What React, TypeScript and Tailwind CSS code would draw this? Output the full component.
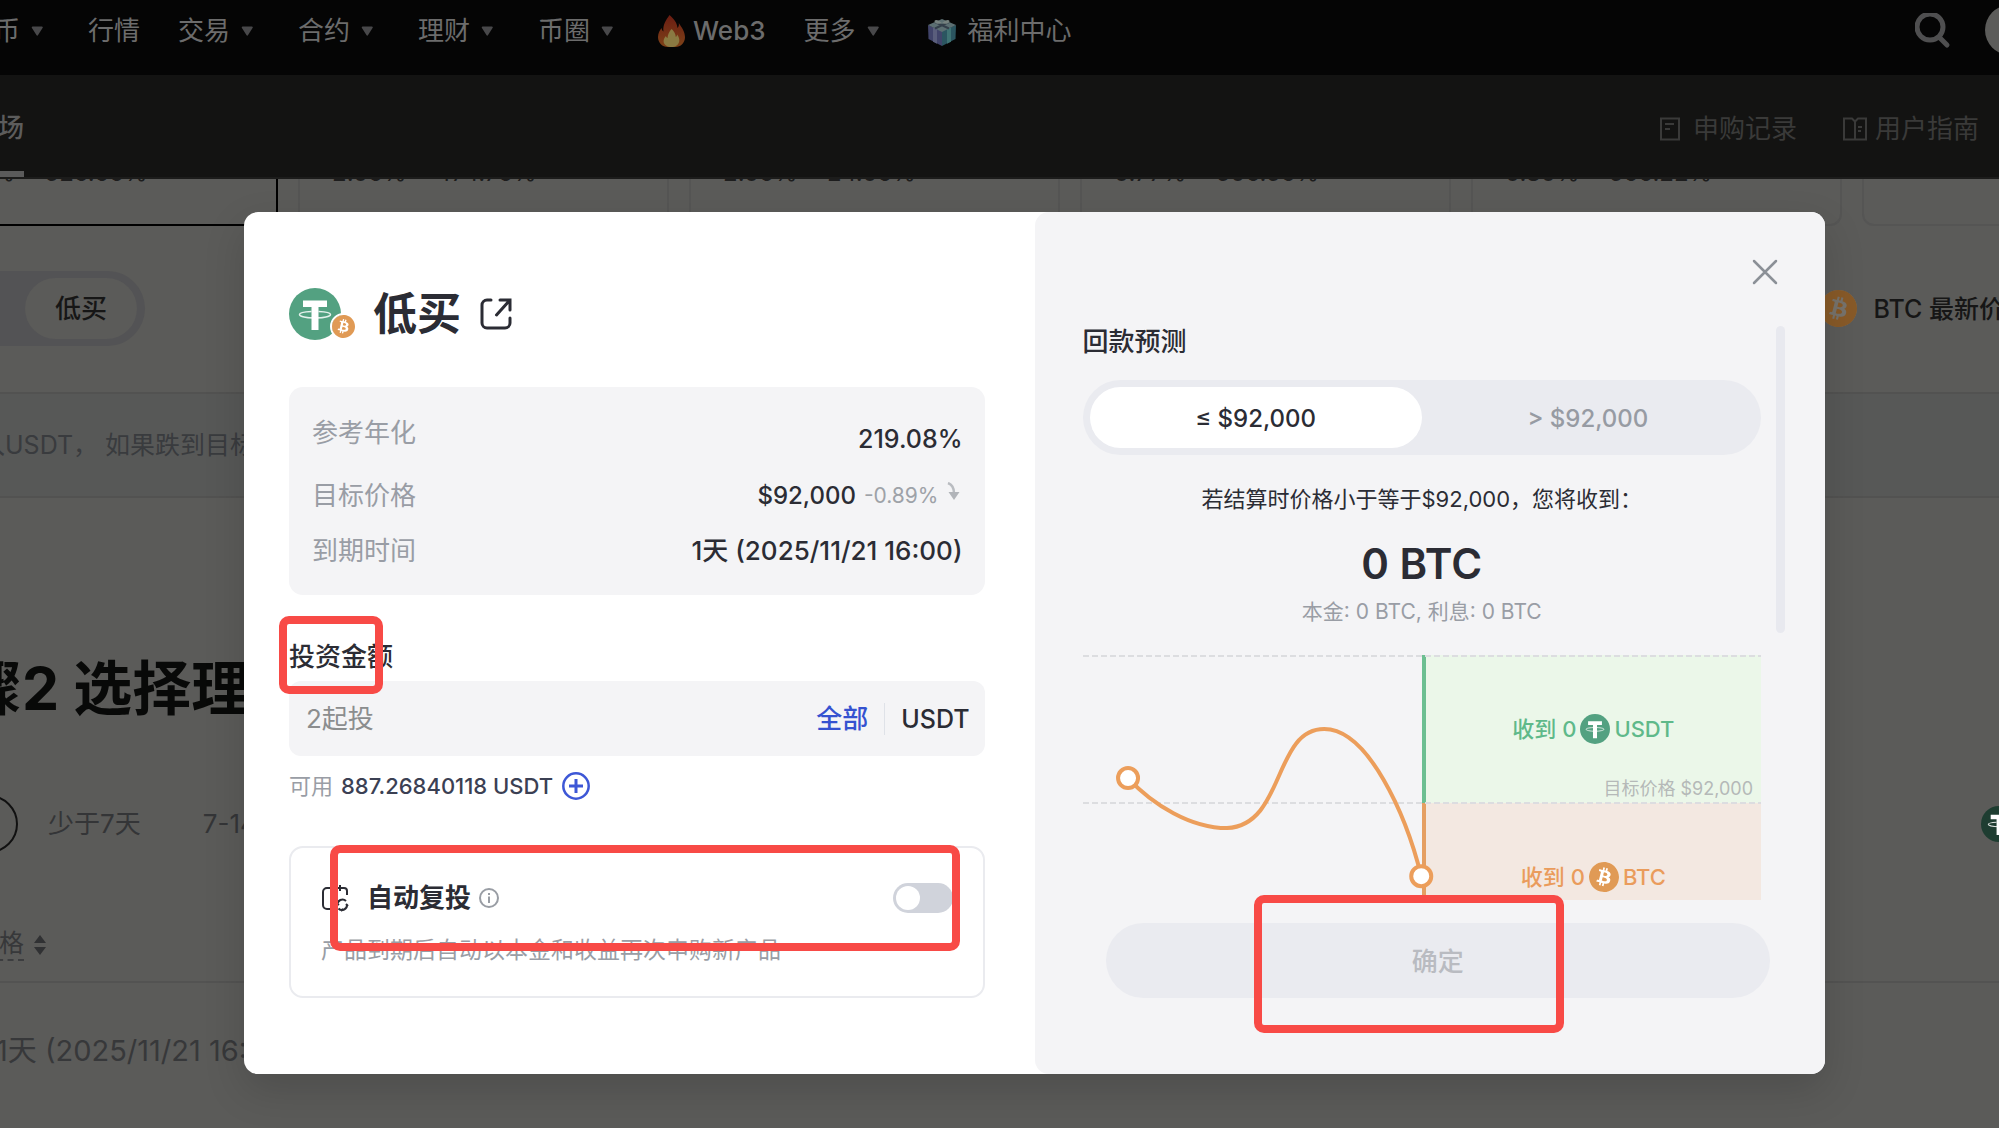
import { useState } from "react";
import { SiBitcoin } from "react-icons/si";

const NAV_ITEMS = [
  { label: "买币", caret: true },
  { label: "行情", caret: false },
  { label: "交易", caret: true },
  { label: "合约", caret: true },
  { label: "理财", caret: true },
  { label: "币圈", caret: true },
];

const PRODUCTS = [
  { apr: "3.06% ~ 526.66%", active: true },
  { apr: "2.06% ~ 474.76%", active: false },
  { apr: "2.06% ~ 24.06%", active: false },
  { apr: "0.77% ~ 506.56%", active: false },
  { apr: "0.80% ~ 566.22%", active: false },
  { apr: "", active: false },
];

function Caret() {
  return (
    <svg className="ml-2 h-3 w-[22px]" viewBox="0 0 22 12" fill="#48484a">
      <path d="M4.500 1.500h9.500a.8.8 0 0 1 .7 1.200l-4.600 7.300a1 1 0 0 1-1.700 0L3.800 2.700a.8.8 0 0 1 .7-1.200z" />
    </svg>
  );
}

function Flame() {
  return (
    <svg className="h-8 w-[27px]" viewBox="0 0 27 32">
      <defs>
        <linearGradient id="flame" x1="0" y1="0" x2="0" y2="1">
          <stop offset="0" stopColor="#6b1c12" />
          <stop offset="1" stopColor="#7d4218" />
        </linearGradient>
      </defs>
      <path
        d="M11.500 0c4.500 4 7.500 7.500 8 13 1.300-1.300 1.600-3 1.300-5 3 4.500 6.200 9 6.200 14 0 6-4.500 10-9.500 10h-8C4.500 32 0 28 0 22 0 18 2 15 3.500 13c.4 2 1 3 2 3.500C4.500 10 8 5 11.500 0z"
        fill="url(#flame)"
      />
      <path
        d="M13.500 14c3.500 3 4 5.500 4.300 8 .9-.7 1.200-1.500 1.400-2.500 1.600 2.500 2.500 4.500 2 7-.7 3.500-3.600 5.500-7.700 5.500s-7.700-2-7.900-5.500c-.1-2.300 1-4 2.300-5.500.4 1 .8 1.600 1.600 2 .2-3.500 1.700-6.500 4-9z"
        fill="#8a7a42"
      />
    </svg>
  );
}

function Gift() {
  return (
    <svg className="h-8 w-9" viewBox="0 0 36 32">
      <path d="M4 10l14 6v15L4.500 24z" fill="#41446a" />
      <path d="M32 10l-14 6v15l13.500-7z" fill="#2b5560" />
      <path d="M4 10l14-6 14 6-14 7z" fill="#5c6f72" />
      <path d="M9 12.500l4 1.700v14.500l-4-2z" fill="#5a5e7c" />
      <path d="M23 14.200l4-1.700v14.200l-4 2z" fill="#3f7374" />
      <path d="M11 7l14 6.500M25 7l-14 6.500" stroke="#333f4a" strokeWidth="2" />
      <path d="M18 8c-5-5-9-3-7-.5S18 8 18 8zm0 0c5-5 9-3 7-.5S18 8 18 8z" fill="#76827f" />
    </svg>
  );
}

function Tether({ className }: { className: string }) {
  return (
    <svg className={className} viewBox="0 0 52 52">
      <circle cx="26" cy="26" r="26" fill="currentColor" />
      <path d="M14 12.500h24V19h-8.500v23h-7V19H14z" fill="#fff" />
      <path
        d="M22.500 23.500C15 23.900 10.500 25 10.500 26.500c0 1.900 7 3.400 15.500 3.400s15.500-1.500 15.500-3.400c0-1.500-4.500-2.600-12-3"
        fill="none"
        stroke="#fff"
        strokeOpacity=".85"
        strokeWidth="1.500"
      />
    </svg>
  );
}

function Bitcoin({ className }: { className: string }) {
  return (
    <span className="flex rounded-full bg-white">
      <SiBitcoin className={className} />
    </span>
  );
}

function Backdrop() {
  return (
    <div className="text-[26px] leading-9">
      <header className="flex h-[75px] items-start bg-[#050505] pt-[13px] text-[#6c6c6c]">
        <nav className="-ml-8 flex items-center gap-[38px]">
          {NAV_ITEMS.map((item) => (
            <a key={item.label} href="#" className="flex items-center whitespace-nowrap">
              {item.label}
              {item.caret && <Caret />}
            </a>
          ))}
          <a href="#" className="flex items-center gap-2">
            <Flame />
            <span className="font-medium">Web3</span>
          </a>
          <a href="#" className="flex items-center whitespace-nowrap">
            更多
            <Caret />
          </a>
          <a href="#" className="flex items-center gap-2 whitespace-nowrap">
            <Gift />
            福利中心
          </a>
        </nav>
        <button aria-label="搜索" className="ml-auto">
          <svg className="h-9 w-9" viewBox="0 0 36 36" fill="none" stroke="#4f4f50" strokeWidth="5">
            <circle cx="15" cy="14" r="13" />
            <path d="M24 24l8 8" strokeLinecap="round" />
          </svg>
        </button>
        <span className="-mt-2 -mr-9 ml-[34px] h-[50px] w-[50px] shrink-0 rounded-full bg-[#5c5c5a]" />
      </header>

      <div className="flex h-[104px] items-stretch justify-between border-b-2 border-[#1c1c1b] bg-[#131312] pr-5 text-[#3a3a39]">
        <a href="#" className="-ml-7 flex items-center border-b-[6px] border-[#5b5b5b] pt-2.5 font-medium text-[#5c5c5c]">
          市场
        </a>
        <div className="flex items-center gap-[46px] pt-1.5">
          <a href="#" className="flex items-center gap-3">
            <svg className="h-6 w-[22px]" viewBox="0 0 22 24" fill="none" stroke="currentColor" strokeWidth="2">
              <path d="M2 1.500h18v21H2zM6 7h9M6 12h5" />
            </svg>
            申购记录
          </a>
          <a href="#" className="flex items-center gap-2">
            <svg className="h-6 w-6" viewBox="0 0 24 24" fill="none" stroke="currentColor" strokeWidth="2">
              <path d="M1 1.500h8l3 3 3-3h8v21H1zM12 4v18M15 10h4M15 14h3" />
            </svg>
            用户指南
          </a>
        </div>
      </div>

      <div className="-ml-[93px] flex gap-5 text-[24px] leading-6 text-[#1d1d1d]">
        {PRODUCTS.map((product) => (
          <div
            key={product.apr}
            className={`h-[47px] w-[371px] shrink-0 overflow-hidden border-t-0 pl-8
              ${product.active
                ? "border-2 border-black"
                : "rounded-b-xl border-2 border-[#555554]"
              }`}
          >
            <p className="-mt-[18px]">{product.apr}</p>
          </div>
        ))}
      </div>

      <div className="mt-[45px] flex items-center justify-between text-[#161616]">
        <div className="-ml-12 flex h-[75px] items-center rounded-full bg-[#535355] pr-2 pl-[73px]">
          <button className="h-[61px] rounded-full bg-[#5b5b59] px-[30px] font-medium">低买</button>
        </div>
        <div className="-mr-[30px] flex items-center gap-4 whitespace-nowrap">
          <span className="rounded-full bg-[#77736c]">
            <SiBitcoin className="h-[37px] w-[37px] text-[#885a28]" />
          </span>
          <span className="text-[25px] font-medium">BTC 最新价格</span>
        </div>
      </div>

      <div className="mt-[46px] flex h-[106px] items-center border-y-2 border-[#525251] bg-[#575857] text-[25px] text-[#393b3e]">
        <p className="-ml-5 whitespace-nowrap">入USDT，&nbsp;如果跌到目标价格</p>
      </div>

      <h1 className="mt-[155px] -ml-[37px] text-[59px] leading-[72px] font-bold whitespace-nowrap text-[#080908]">
        骤2 选择理财产品
      </h1>

      <div className="mt-[70px] flex items-center text-[26px] text-[#343537]">
        <button className="-ml-16 h-[58px] w-[82px] rounded-full border-2 border-[#111] text-left">全部</button>
        <button className="ml-[30px]">少于7天</button>
        <button className="ml-[62px]">7-14天</button>
        <Tether className="mr-[-18px] ml-auto h-9 w-9 text-[#1e3d31]" />
      </div>

      <div className="mt-[74px] flex h-[56px] items-start border-b-2 border-[#535352] text-[25px] text-[#37383a]">
        <span className="-ml-[76px] border-b-2 border-dashed border-[#3c3d3f] leading-8">目标价格</span>
        <svg className="mt-2 ml-2.5 h-5 w-3" viewBox="0 0 12 20" fill="#303133">
          <path d="M6 0l6 8H0zM6 20l6-8H0z" />
        </svg>
      </div>
      <p className="-ml-1 pt-[50px] text-[29px] whitespace-nowrap text-[#37383a]">1天 (2025/11/21 16:00)</p>
    </div>
  );
}

function InvestPanel() {
  const [autoInvest, setAutoInvest] = useState(false);

  return (
    <section className="px-[45px] py-[76px] pr-[50px] text-[26px] leading-9 text-[#2b2c34]">
      {/* Title */}
      <div className="flex h-[52px] items-center">
        <div className="relative">
          <Tether className="h-[52px] w-[52px] text-[#53a181]" />
          <div className="absolute -right-4 bottom-0 rounded-full border-2 border-white">
            <Bitcoin className="h-[23px] w-[23px] text-[#e09a55]" />
          </div>
        </div>
        <h2 className="ml-8 text-[44px] font-bold">低买</h2>
        <a href="#" aria-label="分享" className="ml-[18px]">
          <svg className="h-9 w-9" viewBox="0 0 36 36" fill="none" stroke="currentColor" strokeWidth="3">
            <path d="M12 4H8a5 5 0 0 0-5 5v18a5 5 0 0 0 5 5h18a5 5 0 0 0 5-5v-5" strokeLinecap="round" />
            <path d="M21 4h10v10M30.500 4.500L17.500 19" strokeLinecap="round" />
          </svg>
        </a>
      </div>

      {/* Product details */}
      <dl className="mt-[47px] rounded-[14px] bg-[#f4f4f6] pt-7 pr-[22px] pb-[26px] pl-[23px]">
        <div className="flex items-center justify-between">
          <dt className="pb-3 text-[#999da5]">参考年化</dt>
          <dd className="text-[25px] font-medium">219.08%</dd>
        </div>
        <div className="mt-[15px] flex items-center justify-between">
          <dt className="text-[#999da5]">目标价格</dt>
          <dd className="flex items-center gap-2 text-[24px] font-medium">
            $92,000
            <span className="text-[21px] font-normal text-[#9ea2a8]">-0.89%</span>
            <svg className="mb-2 h-5 w-4" viewBox="0 0 16 20">
              <path d="M1 1c5 2 6 6 6 10" fill="none" stroke="#b9bcc1" strokeWidth="2.500" />
              <path d="M1.500 10h11L7 18z" fill="#b1b4b9" />
            </svg>
          </dd>
        </div>
        <div className="mt-[19px] flex items-center justify-between">
          <dt className="text-[#999da5]">到期时间</dt>
          <dd className="text-[26px] font-medium">1天 (2025/11/21 16:00)</dd>
        </div>
      </dl>

      {/* Amount */}
      <label htmlFor="amount" className="mt-11 block font-medium">
        投资金额
      </label>
      <div className="mt-1.5 flex h-[75px] items-center rounded-xl bg-[#f4f4f6] pr-[15px] pl-[17px]">
        <input
          id="amount"
          placeholder="2起投"
          className="min-w-0 flex-1 bg-transparent outline-none placeholder:text-[#8b8d8e]"
        />
        <button className="font-medium text-[#3552d0]">全部</button>
        <span className="mx-4 h-8 w-px bg-[#dfe2e8]" />
        <span className="text-[25px] font-medium">USDT</span>
      </div>
      <div className="mt-3.5 flex items-center text-[22px] leading-8">
        <span className="text-[#999da5]">可用</span>
        <span className="ml-2 font-medium text-[#3b4053]">887.26840118 USDT</span>
        <button aria-label="充值" className="ml-2">
          <svg className="h-[30px] w-[30px]" viewBox="0 0 30 30" fill="none" stroke="#3d57d6" strokeWidth="2.500">
            <circle cx="15" cy="15" r="12.700" />
            <path d="M15 8v14M8 15h14" strokeWidth="3" />
          </svg>
        </button>
      </div>

      {/* Auto reinvest */}
      <div className="mt-11 rounded-[14px] border-2 border-[#eaebef] px-[30px] pt-8 pb-[30px]">
        <div className="flex items-center">
          <svg className="h-7 w-7" viewBox="0 0 28 28" fill="none" stroke="currentColor" strokeWidth="2">
            <path d="M13 4H6a4 4 0 0 0-4 4v13a4 4 0 0 0 4 4h6M16 4h7a3 3 0 0 1 3 3v4M19 1v6" />
            <path d="M16.500 21a5 5 0 0 1 8.500-4M26 20.500a5 5 0 0 1-8.500 4M18 21l-2-1.500M25 20l2 2M20 27l2-2" />
          </svg>
          <label htmlFor="auto-invest" className="ml-[18px] font-bold">
            自动复投
          </label>
          <svg className="ml-2 h-5 w-5" viewBox="0 0 20 20" fill="none" stroke="#999da4" strokeWidth="2">
            <circle cx="10" cy="10" r="9" />
            <path d="M10 8.500v6.500M10 5v2" />
          </svg>
          <span className="relative ml-auto flex">
            <input
              id="auto-invest"
              type="checkbox"
              checked={autoInvest}
              onChange={() => setAutoInvest(!autoInvest)}
              className="peer h-[30px] w-[60px] appearance-none rounded-full bg-[#d0d3db] checked:bg-[#3552d0]"
            />
            <span className="pointer-events-none absolute top-[3px] left-[3px] h-6 w-6 rounded-full bg-white peer-checked:left-[33px]" />
          </span>
        </div>
        <p className="mt-[18px] text-[23px] leading-8 text-[#999da5]">产品到期后自动以本金和收益再次申购新产品</p>
      </div>
    </section>
  );
}

function Chart() {
  return (
    <div className="relative mt-[27px] grid h-[245px] grid-cols-2 text-[22px] leading-[30px]">
      <svg className="z-10 h-full w-full overflow-visible" viewBox="0 0 339 245" fill="none" stroke="#ec9e5b" strokeWidth="4">
        <path d="M45 123C70 150 108 173 144 173C202 170 190 74 241 74C285 74 323 160 338 221" />
        <circle cx="45" cy="123" r="10" fill="#fff" />
        <circle cx="338" cy="221" r="10" fill="#fff" />
      </svg>
      <div>
        <div className="relative flex h-[148px] items-center justify-center gap-1 border-l-4 border-[#6cbf91] bg-[#ebf7e9] font-medium text-[#5fb98a]">
          收到 0
          <Tether className="h-[30px] w-[30px] text-[#53a181]" />
          USDT
          <span className="absolute right-2 bottom-0.5 text-[18px] leading-6 font-normal text-[#b5b9b8]">
            目标价格 $92,000
          </span>
        </div>
        <div className="flex h-[97px] items-end justify-center gap-1 border-l-4 border-[#e59f62] bg-[#f3e8e1] pb-2 font-medium text-[#ea9c5c]">
          收到 0
          <Bitcoin className="h-[30px] w-[30px] text-[#e09a55]" />
          BTC
        </div>
      </div>
      <svg className="absolute inset-0 h-full w-full" stroke="#dcdde0" strokeWidth="2" strokeDasharray="6 3">
        <line x1="0" y1="1" x2="100%" y2="1" />
        <line x1="0" y1="148" x2="100%" y2="148" />
      </svg>
    </div>
  );
}

function ForecastPanel() {
  const [below, setBelow] = useState(true);

  return (
    <section className="rounded-[14px] bg-[#f4f4f6] pt-11 pb-[76px] text-[26px] leading-9 text-[#2b2c34]">
      <div className="flex justify-end pr-11">
        <button aria-label="关闭">
          <svg className="h-8 w-8" viewBox="0 0 32 32" fill="none" stroke="#8b9097" strokeWidth="2.500">
            <path d="M5 5l22 22M27 5L5 27" strokeLinecap="round" />
          </svg>
        </button>
      </div>

      <div className="mt-9 flex gap-[15px] pr-10 pl-12">
        <div className="flex-1">
          <h3 className="font-medium">回款预测</h3>
          <div className="mt-5 flex h-[75px] rounded-full bg-[#eaebf0] p-[7px] text-[24px] font-medium">
            <button
              onClick={() => setBelow(true)}
              className={`flex-1 rounded-full pt-0.5 ${below ? "bg-white" : "text-[#979ba3]"}`}
            >
              ≤ $92,000
            </button>
            <button
              onClick={() => setBelow(false)}
              className={`flex-1 rounded-full pt-0.5 ${below ? "text-[#979ba3]" : "bg-white"}`}
            >
              &gt; $92,000
            </button>
          </div>
          <p className="mt-7 text-center text-[22px] leading-8">若结算时价格小于等于$92,000，您将收到：</p>
          <p className="mt-[23px] text-center text-[42px] leading-[52px] font-semibold">0 BTC</p>
          <p className="mt-1.5 text-center text-[21px] leading-8 text-[#999da5]">本金: 0 BTC, 利息: 0 BTC</p>
          <Chart />
        </div>
        <div className="mt-0.5 h-[307px] w-[9px] rounded-full bg-[#e8e9ef]" />
      </div>

      <div className="mt-[23px] pr-[55px] pl-[71px]">
        <button
          disabled
          className="h-[75px] w-full rounded-full bg-[#eaebf0] pt-0.5 font-medium text-[#b9bbc1]"
        >
          确定
        </button>
      </div>
    </section>
  );
}

export default function App() {
  return (
    <main className="relative min-h-screen overflow-hidden bg-[#5b5b59] font-['Inter','Noto_Sans_CJK_SC',sans-serif]">
      <div className="absolute inset-0 overflow-hidden">
        <Backdrop />
      </div>

      <div className="relative pt-[212px] pr-[174px] pb-[54px] pl-[244px]">
        <div
          role="dialog"
          aria-label="低买"
          className="relative grid grid-cols-2 rounded-[14px] bg-white shadow-[0_16px_40px_rgba(0,0,0,0.15)]"
        >
          <InvestPanel />
          <ForecastPanel />

          {/* Highlight frames */}
          <span className="pointer-events-none absolute top-[404px] left-[35px] h-[78px] w-[104px] rounded-[10px] border-8 border-[#f84a46]" />
          <span className="pointer-events-none absolute top-[633px] left-[86px] h-[106px] w-[630px] rounded-[10px] border-8 border-[#f84a46]" />
          <span className="pointer-events-none absolute top-[683px] left-[1010px] z-20 h-[138px] w-[310px] rounded-[10px] border-8 border-[#f84a46]" />
        </div>
      </div>
    </main>
  );
}
